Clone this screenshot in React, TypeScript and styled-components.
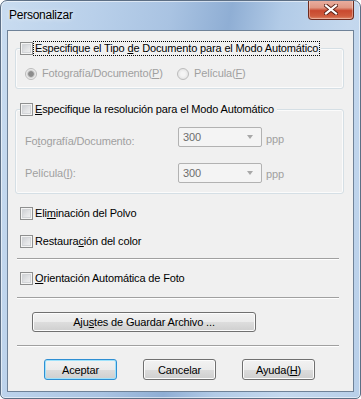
import React from 'react';
import styled, { createGlobalStyle } from 'styled-components';

const GlobalStyle = createGlobalStyle`
  html, body {
    margin: 0;
    padding: 0;
    background: #ffffff;
  }
  body {
    font-family: "Liberation Sans", Arial, sans-serif;
  }
`;

const Window = styled.div`
  width: 361px;
  height: 399px;
  box-sizing: border-box;
  border: 1px solid #5d6f85;
  border-radius: 7px 7px 5px 5px;
  background: linear-gradient(100deg, #c9dcf0 0%, #b9d0ea 22%, #a9c3e2 40%, #8faed4 54%, #b2cbe7 66%, #c4d8ee 82%, #b8cfe9 100%);
  box-shadow: inset 0 0 0 1px rgba(255, 255, 255, 0.55);
  padding: 0 6px 6px 6px;
  display: flex;
  flex-direction: column;
  overflow: hidden;
`;

const TitleBar = styled.div`
  height: 29px;
  display: flex;
  align-items: flex-start;
  justify-content: space-between;
`;

const Title = styled.div`
  font-size: 12px;
  line-height: 14px;
  letter-spacing: -0.25px;
  color: #000;
  padding: 7px 0 0 2px;
  text-shadow: 0 0 5px rgba(255, 255, 255, 0.9);
`;

const CloseButton = styled.div`
  width: 46px;
  height: 20px;
  margin-top: -1px;
  box-sizing: border-box;
  border: 1px solid #6e2b1e;
  border-top: none;
  border-radius: 0 0 4px 4px;
  background: linear-gradient(#eab0a2 0%, #e09884 40%, #c9492f 56%, #cf5c3e 85%, #e08a6b 100%);
  box-shadow: inset 0 0 0 1px rgba(255, 255, 255, 0.35);
  display: flex;
  align-items: center;
  justify-content: center;
`;

const Client = styled.div`
  flex: 1;
  box-sizing: border-box;
  border: 1px solid #6f8298;
  background: #f0f0f0;
  padding: 17px 9px 0 7px;
  font-size: 11px;
  letter-spacing: -0.15px;
  color: #000;
`;

const Group = styled.div<{ $top: number; $bottom: number }>`
  width: 329px;
  box-sizing: border-box;
  margin-top: ${p => p.$top}px;
  border: 1px solid #d5dfe5;
  border-radius: 3px;
  box-shadow: inset 0 0 0 1px rgba(255, 255, 255, 0.7);
  padding-bottom: ${p => p.$bottom}px;
`;

const Legend = styled.div`
  display: flex;
  align-items: center;
  width: fit-content;
  height: 13px;
  margin: -7px 0 0 4px;
  padding-right: 2px;
  background: #f0f0f0;
`;

const CheckBox = styled.span`
  flex: none;
  width: 13px;
  height: 13px;
  box-sizing: border-box;
  border: 1px solid #8e8f8f;
  background: linear-gradient(135deg, #c6c9cd 0%, #e3e4e6 55%, #f6f6f6 100%);
  box-shadow: inset 0 0 0 1px #f4f4f4, inset 0 0 0 2px #d3d5d8;
`;

const Label = styled.span<{ $disabled?: boolean; $focused?: boolean }>`
  line-height: 13px;
  white-space: nowrap;
  margin-left: 1px;
  padding: 0 1px;
  color: ${p => (p.$disabled ? '#a0a0a0' : '#000')};
  outline: ${p => (p.$focused ? '1px dotted #000' : 'none')};
  outline-offset: 0;
`;

const CheckRow = styled.div<{ $top: number }>`
  display: flex;
  align-items: center;
  height: 13px;
  margin: ${p => p.$top}px 0 0 5px;
`;

const RadioRow = styled.div`
  display: flex;
  align-items: center;
  height: 13px;
  margin-top: 12px;
  padding-left: 9px;
`;

const RadioOption = styled.div<{ $width?: number }>`
  display: flex;
  align-items: center;
  gap: 3px;
  width: ${p => (p.$width ? `${p.$width}px` : 'auto')};
`;

const Radio = styled.span<{ $checked?: boolean }>`
  flex: none;
  width: 12px;
  height: 12px;
  box-sizing: border-box;
  border-radius: 50%;
  border: 1px solid #bcbcbc;
  background: ${p =>
    p.$checked
      ? 'radial-gradient(circle, #8c8c8c 0 2.4px, #b8b8b8 3px, #e2e2e2 4px, #f2f2f2 5px)'
      : 'radial-gradient(circle, #f4f4f4 0 2px, #e6e6e6 5px)'};
`;

const FieldRow = styled.div<{ $top: number }>`
  display: grid;
  grid-template-columns: 149px 84px auto;
  column-gap: 4px;
  height: 20px;
  margin-top: ${p => p.$top}px;
  padding-left: 9px;
`;

const FieldLabel = styled.span<{ $shift: number }>`
  color: #a0a0a0;
  line-height: 13px;
  white-space: nowrap;
  padding-top: ${p => p.$shift}px;
`;

const Combo = styled.div`
  box-sizing: border-box;
  height: 20px;
  border: 1px solid #b2b2b2;
  border-radius: 2px;
  background: #f4f4f4;
  display: flex;
  align-items: center;
  justify-content: space-between;
  padding: 0 8px 0 4px;
  color: #6d6d6d;
`;

const Arrow = styled.span`
  width: 0;
  height: 0;
  border-left: 3.5px solid transparent;
  border-right: 3.5px solid transparent;
  border-top: 4px solid #a8a8a8;
`;

const Unit = styled.span`
  color: #a0a0a0;
  align-self: end;
  line-height: 13px;
  padding-bottom: 2px;
`;

const Separator = styled.div<{ $top: number }>`
  width: 322px;
  height: 0;
  margin: ${p => p.$top}px 0 0 2px;
  border-top: 1px solid #a0a0a0;
  border-bottom: 1px solid #ffffff;
`;

const Button = styled.button<{ $width: number; $default?: boolean }>`
  display: block;
  box-sizing: border-box;
  width: ${p => p.$width}px;
  height: 100%;
  padding: 0;
  font-family: "Liberation Sans", Arial, sans-serif;
  font-size: 11px;
  letter-spacing: -0.15px;
  color: #000;
  border: 1px solid ${p => (p.$default ? '#2f8fd3' : '#707070')};
  border-radius: 3px;
  background: linear-gradient(#f2f2f2 0%, #ebebeb 50%, #dddddd 51%, #cfcfcf 100%);
  box-shadow: inset 0 0 0 1px ${p => (p.$default ? '#9fe2fb' : '#fcfcfc')};
`;

const SaveRow = styled.div`
  height: 20px;
  margin: 13px 0 0 17px;
`;

const ButtonRow = styled.div`
  display: flex;
  gap: 26px;
  height: 21px;
  margin: 12px 0 0 29px;
`;

const CloseGlyph = () => (
  <svg width="14" height="11" viewBox="0 0 14 11">
    <path d="M2 1.5 L12 9.5 M12 1.5 L2 9.5" stroke="#5a2116" strokeWidth="4" strokeLinecap="square" />
    <path d="M2 1.5 L12 9.5 M12 1.5 L2 9.5" stroke="#ffffff" strokeWidth="2.2" strokeLinecap="square" />
  </svg>
);

export default function App() {
  return (
    <>
      <GlobalStyle />
      <Window>
        <TitleBar>
          <Title>Personalizar</Title>
          <CloseButton>
            <CloseGlyph />
          </CloseButton>
        </TitleBar>
        <Client>
          <Group $top={0} $bottom={8}>
            <Legend>
              <CheckBox />
              <Label $focused>
                Especifique el Tipo <u>d</u>e Documento para el Modo Automático
              </Label>
            </Legend>
            <RadioRow>
              <RadioOption $width={152}>
                <Radio $checked />
                <Label $disabled>
                  Fotografía/Documento(<u>P</u>)
                </Label>
              </RadioOption>
              <RadioOption>
                <Radio />
                <Label $disabled>
                  Película(<u>F</u>)
                </Label>
              </RadioOption>
            </RadioRow>
          </Group>

          <Group $top={20} $bottom={10}>
            <Legend>
              <CheckBox />
              <Label>
                <u>E</u>specifique la resolución para el Modo Automático
              </Label>
            </Legend>
            <FieldRow $top={11}>
              <FieldLabel $shift={8}>
                Fo<u>t</u>ografía/Documento:
              </FieldLabel>
              <Combo>
                <span>300</span>
                <Arrow />
              </Combo>
              <Unit>ppp</Unit>
            </FieldRow>
            <FieldRow $top={16}>
              <FieldLabel $shift={4}>
                Película(<u>I</u>):
              </FieldLabel>
              <Combo>
                <span>300</span>
                <Arrow />
              </Combo>
              <Unit>ppp</Unit>
            </FieldRow>
          </Group>

          <CheckRow $top={13}>
            <CheckBox />
            <Label>
              Eli<u>m</u>inación del Polvo
            </Label>
          </CheckRow>
          <CheckRow $top={15}>
            <CheckBox />
            <Label>
              Restaura<u>c</u>ión del color
            </Label>
          </CheckRow>
          <Separator $top={10} />
          <CheckRow $top={12}>
            <CheckBox />
            <Label>
              <u>O</u>rientación Automática de Foto
            </Label>
          </CheckRow>
          <Separator $top={12} />
          <SaveRow>
            <Button $width={224}>
              Aju<u>s</u>tes de Guardar Archivo ...
            </Button>
          </SaveRow>
          <Separator $top={13} />
          <ButtonRow>
            <Button $width={73} $default>
              Aceptar
            </Button>
            <Button $width={73}>Cancelar</Button>
            <Button $width={73}>
              Ayuda(<u>H</u>)
            </Button>
          </ButtonRow>
        </Client>
      </Window>
    </>
  );
}
